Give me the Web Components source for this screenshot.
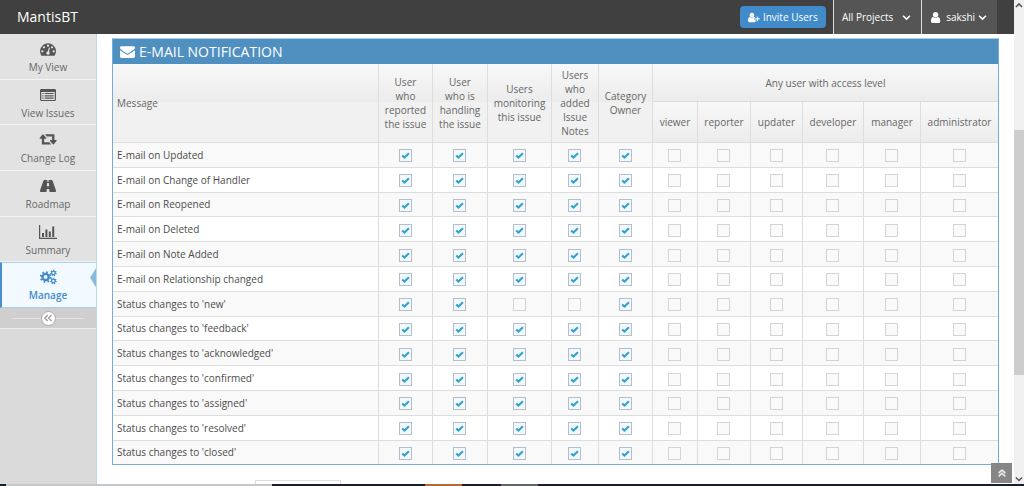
<!DOCTYPE html>
<html lang="en">
<head>
<meta charset="utf-8">
<title>MantisBT - E-Mail Notification</title>
<style>
html, body { margin: 0; height: 100%; }
body { font-family: "Open Sans", sans-serif; font-size: 10px; color: #555; background: #fff; overflow: hidden; }
</style>
</head>
<body>
<mantis-app></mantis-app>

<template id="app-tpl">
<style>
:host { display: grid; grid-template-columns: 1fr auto; grid-template-rows: 1fr auto; height: 100vh; }
.page { position: relative; min-height: 0; overflow: hidden; display: flex; flex-direction: column; background: #fff; }
.body { flex: 1; min-height: 0; display: grid; grid-template-columns: 97px 1fr; }
main { min-width: 0; min-height: 0; overflow: hidden; padding: 4px 15px 0 15px; }
task-strip { grid-column: 1 / -1; }
.reset { display: block; margin: 15px 0 0 143px; width: 86px; height: 24px; border: 1px solid #ddd; background: #fff; padding: 0; }
.top { position: absolute; right: 2px; bottom: 1px; width: 21px; height: 20px; border: 0; padding: 0; background: #868686; color: #e8e8e8; display: grid; place-items: center; --size: 10px; }
</style>
<div class="page">
  <top-bar></top-bar>
  <div class="body">
    <side-nav>
      <side-item icon="gauge">My View</side-item>
      <side-item icon="list">View Issues</side-item>
      <side-item icon="retweet">Change Log</side-item>
      <side-item icon="road">Roadmap</side-item>
      <side-item icon="chart">Summary</side-item>
      <side-item icon="cogs" active>Manage</side-item>
    </side-nav>
    <main>
      <notify-panel heading="E-MAIL NOTIFICATION"><notify-table></notify-table></notify-panel>
      <button class="reset" aria-label="Update prefs"></button>
    </main>
  </div>
  <button class="top" aria-label="Scroll to top"><fa-icon name="dblup"></fa-icon></button>
</div>
<page-scrollbar></page-scrollbar>
<task-strip></task-strip>
</template>

<template id="top-tpl">
<style>
:host { display: flex; align-items: stretch; height: 34px; background: #404040; color: #fff; padding-right: 17px; flex: none; }
.brand { color: #fff; text-decoration: none; font-size: 14px; line-height: 34px; padding-left: 17px; margin-right: auto; }
button { font: inherit; color: #fff; border: 0; display: flex; align-items: center; white-space: nowrap; }
.invite { align-self: center; height: 22px; width: 86px; padding: 0; justify-content: center; gap: 2px; border-radius: 4px; background: #428bca; margin-right: 7px; --size: 11px; }
.menu { background: #555; border-left: 1px solid #ddd; padding: 0 8px; }
.projects { width: 88px; gap: 9px; --size: 9px; }
.account { width: 76px; gap: 5px; }
.account .u { --size: 13px; }
.account .d { --size: 9px; margin-left: -2px; }
</style>
<a class="brand" href="#">MantisBT</a>
<button class="invite"><fa-icon name="userplus"></fa-icon>Invite Users</button>
<button class="menu projects">All Projects<fa-icon name="down"></fa-icon></button>
<button class="menu account"><fa-icon class="u" name="user"></fa-icon>sakshi<fa-icon class="d" name="down"></fa-icon></button>
</template>

<template id="nav-tpl">
<style>
:host { display: flex; flex-direction: column; box-sizing: border-box; background: #dadada; border-right: 1px solid #b9d7ec; }
nav { display: flex; flex-direction: column; height: 274px; }
.fold { height: 21px; border: 0; border-bottom: 1px solid #ececec; padding: 0 12px; background: #cfcfcf; color: #999; display: flex; align-items: center; --size: 12px; }
.fold i { flex: 1; height: 1px; background: #e4e4e4; }
.fold span { width: 13px; height: 13px; border: 1px solid #aaa; border-radius: 50%; background: #fff; display: grid; place-items: center; }
</style>
<nav aria-label="Main"><slot></slot></nav>
<button class="fold" aria-label="Collapse sidebar"><i></i><span><fa-icon name="dblleft"></fa-icon></span><i></i></button>
</template>

<template id="item-tpl">
<style>
:host { display: flex; flex: 1; position: relative; }
a { flex: 1; box-sizing: border-box; display: flex; flex-direction: column; align-items: center; padding-top: 7px; gap: 3px; color: #666; text-decoration: none; line-height: 15px; background: #e2e2e2; border-bottom: 1px solid #f4f4f4; --size: 16px; }
fa-icon { color: #555; }
:host([active]) a { background: #f2faff; color: #428bca; font-weight: 600; border-top: 1px solid #a9cfe8; border-bottom-color: #a9cfe8; border-left: 2px solid #4a8fcb; padding-top: 6px; padding-right: 2px; }
:host([active]) fa-icon { color: #428bca; }
:host([active])::after { content: ""; position: absolute; right: 0; top: 6px; width: 6px; height: 19px; background: #8bb9d9; clip-path: polygon(100% 0, 0 50%, 100% 100%); }
</style>
<a href="#"><fa-icon></fa-icon><span><slot></slot></span></a>
</template>

<template id="panel-tpl">
<style>
:host { display: block; border: 1px solid #72acd8; border-top-color: #a9cfe8; }
h1 { margin: 0; height: 25px; display: flex; align-items: center; gap: 4px; padding-left: 7px; background: #4f90c1; color: #fff; font-weight: 400; font-size: 14px; line-height: 25px; --size: 15px; }
</style>
<h1><fa-icon name="mail"></fa-icon><span></span></h1>
<slot></slot>
</template>

<template id="table-tpl">
<style>
:host { display: block; }
table { width: 100%; height: 400px; table-layout: fixed; border-collapse: separate; border-spacing: 0; line-height: 14px; }
th, td { box-sizing: border-box; padding: 0 4px; border-right: 1px solid #ddd; border-bottom: 1px solid #ddd; text-align: center; vertical-align: middle; }
thead th { color: #666; font-weight: 500; background: linear-gradient(#f8f8f8, #ececec); }
thead th[rowspan] { background: linear-gradient(#f8f8f8, #ececec) top / 100% 38px no-repeat #f1f1f1; }
th:first-child, td:first-child { text-align: left; }
tr > .end { border-right: 0; }
tbody th { font-weight: 400; color: #4c4c4c; }
tbody th, tbody td { background: #fff; }
tbody tr:nth-child(odd) > * { background: #f9f9f9; }
tbody tr:last-child > * { border-bottom: 0; }
.h1 { height: 38px; } .h2 { height: 41px; }
input { appearance: none; display: block; box-sizing: border-box; width: 13px; height: 13px; margin: 2px auto 0; border: 1px solid #d4d4d4; background: #fafafa; }
input:checked { border-color: #b3bfca; background: #f3f8fc url("data:image/svg+xml,%3Csvg xmlns='http://www.w3.org/2000/svg' viewBox='0 0 11 11'%3E%3Cpath d='M2.2 5.4l2.3 2.2L8.9 3.3' fill='none' stroke='%2332a3ce' stroke-width='2.1'/%3E%3C/svg%3E") center / 11px no-repeat; }
</style>
<table>
<colgroup><col><col style="width:54px"><col style="width:55px"><col style="width:64px"><col style="width:47px"><col style="width:54px"><col style="width:45px"><col style="width:53px"><col style="width:52px"><col style="width:61px"><col style="width:57px"><col style="width:77px"></colgroup>
<thead>
<tr class="h1"><th rowspan="2" scope="col">Message</th><th rowspan="2" scope="col">User<br>who<br>reported<br>the issue</th><th rowspan="2" scope="col">User<br>who is<br>handling<br>the issue</th><th rowspan="2" scope="col">Users<br>monitoring<br>this issue</th><th rowspan="2" scope="col">Users<br>who<br>added<br>Issue<br>Notes</th><th rowspan="2" scope="col">Category<br>Owner</th><th colspan="6" scope="colgroup" class="end">Any user with access level</th></tr>
<tr class="h2"><th scope="col" style="text-align:center">viewer</th><th scope="col">reporter</th><th scope="col">updater</th><th scope="col">developer</th><th scope="col">manager</th><th scope="col" class="end">administrator</th></tr>
</thead>
<tbody></tbody>
</table>
</template>

<template id="scroll-tpl">
<style>
:host { display: flex; flex-direction: column; width: 10px; background: #f0f0f0; color: #555; --size: 8px; }
fa-icon { height: 10px; align-self: center; }
.track { flex: 1; display: grid; grid-template-rows: 120fr 245fr 99fr; }
.track i { grid-row: 2; background: #cdcdcd; }
</style>
<fa-icon name="up"></fa-icon><div class="track"><i></i></div><fa-icon name="down"></fa-icon>
</template>

<template id="strip-tpl">
<style>
:host { display: grid; height: 2px; grid-template-columns: 6fr 266fr 153fr 37fr 39fr 37fr 486fr; background: #17202a; }
.a { grid-column: 2; background: #c4c8ca; } .b { grid-column: 4; background: #b06a38; } .c { grid-column: 6; background: #5d6668; }
</style>
<i class="a"></i><i class="b"></i><i class="c"></i>
</template>

<script>
const stamp = (el, id) => {
  const root = el.attachShadow({ mode: "open" });
  root.append(document.getElementById(id).content.cloneNode(true));
  return root;
};
const USER = "M1536 1399q0 109-62.5 187t-150.5 78h-854q-88 0-150.5-78t-62.5-187q0-85 8.5-160.5t31.5-152 58.5-131 94-89 134.5-34.5q131 128 313 128t313-128q76 0 134.5 34.5t94 89 58.5 131 31.5 152 8.5 160.5zm-256-887q0 159-112.5 271.5t-271.5 112.5-271.5-112.5-112.5-271.5 112.5-271.5 271.5-112.5 271.5 112.5 112.5 271.5z";
const line = (d, w) => `<path d="${d}" fill="none" stroke="currentColor" stroke-width="${w}"/>`;
const gear = (x, y, r, w, n, t) => {
  const step = 2 * Math.PI * (r + w / 2) / n;
  return `<g fill="none" stroke="currentColor"><circle cx="${x}" cy="${y}" r="${r}" stroke-width="${w}"/><circle cx="${x}" cy="${y}" r="${r + w / 2}" stroke-width="${t}" stroke-dasharray="${step * .45} ${step * .55}"/></g>`;
};
const ICONS = {
  mail: ["0 0 1792 1792", `<path d="M1792 710v794q0 66-47 113t-113 47h-1472q-66 0-113-47t-47-113v-794q44 49 101 87 362 246 497 345 57 42 92.5 65.5t94.5 48 110 24.5h2q51 0 110-24.5t94.5-48 92.5-65.5q170-123 498-345 57-39 100-87zm0-294q0 79-49 151t-122 123q-376 261-468 325-10 7-42.5 31t-54 38.5-52 32.5-57.5 27-50 9h-2q-23 0-50-9t-57.5-27-52-32.5-54-38.5-42.5-31q-91-64-262-182.5t-205-142.5q-62-42-117-115.5t-55-136.5q0-78 41.5-130t118.5-52h1472q65 0 112.5 47t47.5 113z"/>`],
  user: ["128 0 1536 1792", `<path d="${USER}"/>`],
  userplus: ["0 0 2048 1792", `<path transform="translate(-256)" d="${USER}"/><path stroke="#428bca" stroke-width="90" d="M1400 700h250v290h310v260h-310v310h-250v-310h-310v-260h310z"/>`],
  gauge: ["0 0 1792 1792", `<path d="M384 1152q0-53-37.5-90.5t-90.5-37.5-90.5 37.5-37.5 90.5 37.5 90.5 90.5 37.5 90.5-37.5 37.5-90.5zm192-448q0-53-37.5-90.5t-90.5-37.5-90.5 37.5-37.5 90.5 37.5 90.5 90.5 37.5 90.5-37.5 37.5-90.5zm428 481l101-382q6-26-7.5-48.5t-38.5-29.5-48 6.5-30 39.5l-101 382q-60 5-107 43.5t-63 98.5q-20 77 20 146t117 89 146-20 89-117q16-60-6-117t-72-91zm660-33q0-53-37.5-90.5t-90.5-37.5-90.5 37.5-37.5 90.5 37.5 90.5 90.5 37.5 90.5-37.5 37.5-90.5zm-640-640q0-53-37.5-90.5t-90.5-37.5-90.5 37.5-37.5 90.5 37.5 90.5 90.5 37.5 90.5-37.5 37.5-90.5zm448 192q0-53-37.5-90.5t-90.5-37.5-90.5 37.5-37.5 90.5 37.5 90.5 90.5 37.5 90.5-37.5 37.5-90.5zm320 448q0 261-141 483-19 29-54 29h-1402q-35 0-54-29-141-221-141-483 0-182 71-348t191-286 286-191 348-71 348 71 286 191 191 286 71 348z"/>`],
  retweet: ["0 128 2048 1792", `<path d="M1344 1504q0 13-9.5 22.5t-22.5 9.5h-960q-8 0-13.5-2t-9-7-5.5-8-3-11.5-1-11.5v-600h-192q-26 0-45-19t-19-45q0-24 15-41l320-384q19-22 49-22t49 22l320 384q15 17 15 41 0 26-19 45t-45 19h-192v384h576q16 0 25 11l160 192q7 10 7 21zm640-416q0 24-15 41l-320 384q-20 23-49 23t-49-23l-320-384q-15-17-15-41 0-26 19-45t45-19h192v-384h-576q-16 0-25-12l-160-192q-7-9-7-20 0-13 9.5-22.5t22.5-9.5h960q8 0 13.5 2t9 7 5.5 8 3 11.5 1 11.5v600h192q26 0 45 19t19 45z"/>`],
  list: ["0 0 16 16", `<path fill-rule="evenodd" d="M1.400 2h13.200q1.400 0 1.400 1.400v9.200q0 1.400-1.400 1.400h-13.200q-1.400 0-1.400-1.400v-9.200q0-1.400 1.400-1.400zm-.2 3v7.600q0 .3.3.3h13q.3 0 .3-.3v-7.600z"/><path d="M2.300 6h1.200v1.100h-1.200zm2.400 0h8.900v1.100h-8.900zm-2.400 2.300h1.200v1.100h-1.200zm2.400 0h8.900v1.100h-8.900zm-2.400 2.300h1.200v1.100h-1.200zm2.400 0h8.900v1.100h-8.900z"/>`],
  road: ["0 0 16 16", `<path fill-rule="evenodd" d="M4.200 2h3.100l-.1 1.700h1.600l-.1-1.700h3.100q.5 0 .7.500l3.400 9.800q.5 1.700-.6 1.700h-5.800l-.3-3h-2.400l-.3 3h-5.800q-1.100 0-.6-1.700l3.400-9.800q.2-.5.7-.5zm2.900 3l-.3 3.200h2.400l-.3-3.200z"/>`],
  chart: ["0 0 18 16", `<path d="M0 1h1.200v12.700h16.800v1.200h-18zm3 8h2v4h-2zm3.400-3.500h2v7.500h-2zm3.400 2h2v5.500h-2zm3.400-5h2v10.500h-2z"/>`],
  cogs: ["0 0 17 16", gear(5.6, 8, 3.1, 2.3, 8, 3.2) + gear(13.4, 4, 1.8, 1.3, 7, 1.7) + gear(13.4, 12, 1.8, 1.3, 7, 1.7)],
  down: ["0 0 10 10", line("M1.200 3l3.800 3.800 3.800-3.800", 1.7)],
  up: ["0 0 10 10", line("M1.200 7.500l3.800-3.800 3.800 3.800", 2)],
  dblup: ["0 0 12 12", line("M2 6l4-3.500 4 3.500M2 10l4-3.500 4 3.500", 2)],
  dblleft: ["0 0 12 12", line("M5.800 3l-3 3 3 3M9.500 3l-3 3 3 3", 1.2)]
};
customElements.define("fa-icon", class extends HTMLElement {
  static observedAttributes = ["name"];
  constructor() { super(); this.attachShadow({ mode: "open" }); }
  attributeChangedCallback() {
    const [box, art] = ICONS[this.getAttribute("name")];
    this.shadowRoot.innerHTML = `<style>:host{display:inline-flex;flex:none;align-items:center}svg{height:var(--size,14px);fill:currentColor;display:block}</style><svg viewBox="${box}" aria-hidden="true">${art}</svg>`;
  }
});
for (const [tag, id] of [["top-bar", "top-tpl"], ["side-nav", "nav-tpl"], ["page-scrollbar", "scroll-tpl"], ["task-strip", "strip-tpl"]])
  customElements.define(tag, class extends HTMLElement { constructor() { super(); stamp(this, id); } });
customElements.define("side-item", class extends HTMLElement {
  connectedCallback() {
    if (!this.shadowRoot) stamp(this, "item-tpl").querySelector("fa-icon").setAttribute("name", this.getAttribute("icon"));
  }
});
customElements.define("notify-panel", class extends HTMLElement {
  connectedCallback() {
    if (!this.shadowRoot) stamp(this, "panel-tpl").querySelector("h1 span").textContent = this.getAttribute("heading");
  }
});
const EVENTS = ["E-mail on Updated", "E-mail on Change of Handler", "E-mail on Reopened", "E-mail on Deleted", "E-mail on Note Added", "E-mail on Relationship changed",
  ...["new", "feedback", "acknowledged", "confirmed", "assigned", "resolved", "closed"].map(s => `Status changes to '${s}'`)];
const ROLES = ["reporter of the issue", "handler", "monitoring users", "note authors", "category owner", "viewer", "reporter", "updater", "developer", "manager", "administrator"];
customElements.define("notify-table", class extends HTMLElement {
  constructor() {
    super();
    stamp(this, "table-tpl").querySelector("tbody").innerHTML = EVENTS.map((event, r) =>
      `<tr><th scope="row">${event}</th>` + ROLES.map((role, c) =>
        `<td${c === 10 ? ' class="end"' : ""}><input type="checkbox" aria-label="${event}: ${role}"${c < 5 && !(r === 6 && (c === 2 || c === 3)) ? " checked" : ""}></td>`).join("") + "</tr>").join("");
  }
});
customElements.define("mantis-app", class extends HTMLElement { constructor() { super(); stamp(this, "app-tpl"); } });
</script>
</body>
</html>
